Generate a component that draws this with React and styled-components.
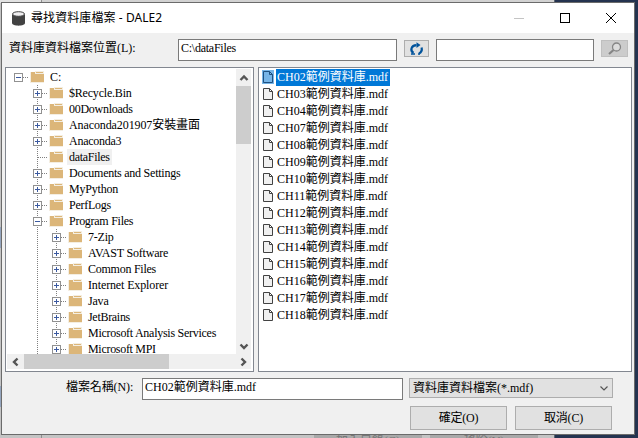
import React from 'react';
import styled, { createGlobalStyle } from 'styled-components';

const Global = createGlobalStyle`
  * { box-sizing: border-box; }
  body { margin: 0; overflow: hidden; }
  svg { flex-shrink: 0; display: block; }
`;

const Desktop = styled.div`
  width: 638px;
  height: 438px;
  overflow: hidden;
  padding: 2px 3px 0 1px;
  background:
    linear-gradient(#8f8f8f, #8f8f8f) 41px 0 / 1px 438px no-repeat,
    linear-gradient(#94a5be, #94a5be) 0 227px / 1px 21px no-repeat,
    linear-gradient(#94a5be, #94a5be) 0 386px / 1px 21px no-repeat,
    linear-gradient(#5c6470, #5c6470) 554px 0 / 1px 438px no-repeat,
    linear-gradient(#24334f, #24334f) 555px 0 / 83px 438px no-repeat,
    linear-gradient(#e2e2e2, #e2e2e2) 0 0 / 41px 3px no-repeat,
    linear-gradient(#d2d2d2, #d2d2d2) 0 0 / 554px 3px no-repeat,
    #c4c4c4;
  font: 12px/16px "Liberation Serif", "Noto Sans CJK TC", serif;
  color: #000;
`;

const Dialog = styled.div`
  width: 634px;
  height: 433px;
  border: 1px solid #6b6b6b;
  background: #f0f0f0;
  display: flex;
  flex-direction: column;
`;

const TitleBar = styled.div`
  height: 30px;
  background: #fff;
  display: flex;
  align-items: center;
  font: 12px/16px "Noto Sans", "Noto Sans CJK TC", sans-serif;
  padding-left: 10px;
`;
const Title = styled.span`
  margin-left: 6px;
  flex: 1;
  white-space: nowrap;
  letter-spacing: 0.08px;
`;
const WindowButtons = styled.div`
  display: flex;
  width: 138px;
`;
const WindowButton = styled.div`
  width: 46px;
  display: flex;
  justify-content: center;
`;

const PathRow = styled.div`
  height: 34px;
  display: flex;
  align-items: flex-start;
  padding: 6px 0 0 7px;
`;
const Label = styled.label`
  width: ${(p) => p.$w}px;
  flex-shrink: 0;
  line-height: 18px;
  letter-spacing: ${(p) => p.$ls || 0}px;
  white-space: nowrap;
`;
const Field = styled.div`
  width: ${(p) => p.$w}px;
  flex-shrink: 0;
  height: 22px;
  border: 1px solid #7a7a7a;
  background: #fff;
  padding: 0 0 0 2px;
  line-height: 17px;
  letter-spacing: ${(p) => p.$ls || 0}px;
  white-space: nowrap;
`;
const ToolButton = styled.div`
  width: ${(p) => p.$w}px;
  flex-shrink: 0;
  height: 17px;
  margin: 1px 7px 0;
  border: 1px solid ${(p) => (p.$off ? '#bfbfbf' : '#adadad')};
  background: ${(p) => (p.$off ? '#ccc' : '#e1e1e1')};
  display: flex;
  align-items: center;
  justify-content: center;
`;

const Panes = styled.div`
  display: flex;
  gap: 4px;
  height: 305px;
  padding-left: 3px;
`;
const Pane = styled.div`
  width: ${(p) => p.$w}px;
  flex-shrink: 0;
  border: 1px solid #828790;
  background: #fff;
  overflow: hidden;
`;
const TreeFrame = styled.div`
  display: grid;
  grid-template: 285px 15px / 229px 15px;
  padding: 1px;
`;
const Tree = styled.div`
  overflow: hidden;
  padding: 0 0 0 2px;
`;
const TreeRow = styled.div`
  display: flex;
  height: 16px;
`;
const NodeLabel = styled.span`
  height: 16px;
  line-height: 16px;
  padding: 0 2px;
  margin-left: 3px;
  letter-spacing: ${(p) => p.$ls}px;
  background: ${(p) => (p.$current ? '#f0f0f0' : 'transparent')};
  white-space: nowrap;
`;
const VScroll = styled.div`
  background: #f0f0f0;
  display: flex;
  flex-direction: column;
`;
const HScroll = styled.div`
  background: #f0f0f0;
  display: flex;
  grid-column: 1 / 3;
`;
const Arrow = styled.div`
  width: ${(p) => (p.$vertical ? 15 : 17)}px;
  height: ${(p) => (p.$vertical ? 17 : 15)}px;
  display: flex;
  align-items: center;
  justify-content: center;
`;
const Thumb = styled.div`
  background: #cdcdcd;
  width: ${(p) => p.$w}px;
  height: ${(p) => p.$h}px;
`;
const Spacer = styled.div`
  flex: 1;
`;

const FileList = styled.div`
  padding: 1px 0 0 3px;
`;
const FileRow = styled.div`
  display: flex;
  height: 17px;
  align-items: flex-start;
`;
const FileName = styled.span`
  margin-left: 2px;
  width: 114px;
  height: 17px;
  line-height: 16px;
  padding-left: 1px;
  white-space: nowrap;
  background: ${(p) => (p.$selected ? '#0078d7' : 'transparent')};
  color: ${(p) => (p.$selected ? '#fff' : '#000')};
`;
const FileIconSvg = styled.svg`
  margin-top: 1px;
`;

const NameRow = styled.div`
  display: flex;
  padding: 6px 0 0 64px;
  height: 34px;
`;
const Select = styled.div`
  width: 204px;
  height: 20px;
  margin-left: 6px;
  border: 1px solid #adadad;
  background: #e1e1e1;
  padding: 0 3px;
  display: flex;
  align-items: center;
  justify-content: space-between;
  line-height: 18px;
`;
const Actions = styled.div`
  display: flex;
  gap: 8px;
  padding-left: 408px;
`;
const Button = styled.div`
  width: 97px;
  height: 24px;
  border: 1px solid #adadad;
  background: #e1e1e1;
  text-align: center;
  line-height: 22px;
  letter-spacing: -0.2px;
`;
const Behind = styled.div`
  display: flex;
  gap: 8px;
  height: 3px;
  overflow: hidden;
  padding-left: 313px;
`;
const BehindButton = styled.div`
  width: 108px;
  height: 24px;
  line-height: 12px;
  text-align: center;
  color: #777;
  background: #a9a9a9;
`;

const chevrons = {
  up: 'M1.5 7 L5 3.5 L8.5 7',
  down: 'M1.5 3.5 L5 7 L8.5 3.5',
  left: 'M6.5 1.5 L3 5 L6.5 8.5',
  right: 'M3.5 1.5 L7 5 L3.5 8.5',
};
const Chevron = ({ dir, w = 2.4, c = '#555' }) => (
  <svg width="10" height="10"><path d={chevrons[dir]} fill="none" stroke={c} strokeWidth={w} /></svg>
);

const Branch = ({ depth, sign, root }) => {
  const x = 9 + depth * 19;
  return (
    <svg width={x + 27} height="16" shapeRendering="crispEdges">
      <g stroke="#808080" strokeDasharray="1 1" fill="none">
        {depth === 2 && <path d="M28.5 0V16" />}
        {!root && <path d={`M${x + 0.5} 0V16`} />}
        <path d={`M${x + 1} 8.5H${x + 11}`} />
      </g>
      {sign && (
        <g>
          <rect x={x - 3.5} y="4.5" width="8" height="8" fill="#fff" stroke="#919191" />
          <path d={`M${x - 2} 8.5H${x + 3}` + (sign === '+' ? `M${x + 0.5} 6V11` : '')} stroke="#3c5aa0" />
        </g>
      )}
      <path d={`M${x + 12} 3H${x + 17}V2H${x + 26}V14H${x + 12}Z`} fill="#f4eee2" />
      <path d={`M${x + 13} 3H${x + 17}V5H${x + 26}V13H${x + 13}Z`} fill="#dcb679" />
      <path d={`M${x + 18} 3.5H${x + 25}`} stroke="#dcb679" />
    </svg>
  );
};

const nodes = [
  ['C:', 0, '-', 0], ['$Recycle.Bin', 1, '+', -0.2], ['00Downloads', 1, '+', -0.27],
  ['Anaconda201907安裝畫面', 1, '+', -0.1], ['Anaconda3', 1, '+', -0.27], ['dataFiles', 1, null, -0.3],
  ['Documents and Settings', 1, '+', -0.24], ['MyPython', 1, '+', -0.2], ['PerfLogs', 1, '+', -0.25],
  ['Program Files', 1, '-', -0.27], ['7-Zip', 2, '+', -0.2], ['AVAST Software', 2, '+', -0.2],
  ['Common Files', 2, '+', -0.25], ['Internet Explorer', 2, '+', -0.13], ['Java', 2, '+', -0.2],
  ['JetBrains', 2, '+', -0.3], ['Microsoft Analysis Services', 2, '+', -0.27], ['Microsoft MPI', 2, '+', -0.3],
];
const files = ['02', '03', '04', '07', '08', '09', '10', '11', '12', '13', '14', '15', '16', '17', '18'];

const FileIcon = ({ selected }) => (
  <FileIconSvg width="12" height="14">
    <rect width="12" height="14" fill={selected ? '#76b5e8' : '#fff'} />
    <path d="M1.5 1.5H7.5L10.5 4.5V12.5H1.5Z M7.5 1.5V4.5H10.5" fill={selected ? '#76b5e8' : '#f0f0f0'} stroke={selected ? '#1f5080' : '#424242'} />
  </FileIconSvg>
);

export default function App() {
  return (
    <Desktop>
      <Global />
      <Dialog>
        <TitleBar>
          <svg width="13" height="15">
            <path d="M0 3.500V12C0 15.500 13 15.500 13 12V3.500Z" fill="#424242" />
            <ellipse cx="6.5" cy="3" rx="6" ry="2.3" fill="#f0eff1" stroke="#424242" />
          </svg>
          <Title>尋找資料庫檔案 - DALE2</Title>
          <WindowButtons>
            <WindowButton><svg width="10" height="10"><path d="M0 5.5H10" stroke="#c4c4c4" /></svg></WindowButton>
            <WindowButton><svg width="10" height="10"><rect x=".5" y=".5" width="9" height="9" fill="none" stroke="#000" /></svg></WindowButton>
            <WindowButton><svg width="10" height="10"><path d="M0 0L10 10M10 0L0 10" stroke="#000" /></svg></WindowButton>
          </WindowButtons>
        </TitleBar>
        <PathRow>
          <Label $w={169}>資料庫資料檔案位置(L):</Label>
          <Field $w={219} $ls={-0.25}>C:\dataFiles</Field>
          <ToolButton $w={25}>
            <svg width="15" height="13" fill="none" stroke="#00539c" strokeWidth="2.2">
              <path d="M4.5 11C0.800 8.500 2 3.500 7.500 3.200" />
              <path d="M2 12H6M9 12H11" strokeWidth="1.300" />
              <path d="M12.600 5.500C13.200 8 12.300 10.300 10 11.500" />
              <path d="M7.500 0.200L11.500 3L7.500 6Z" fill="#00539c" stroke="none" />
            </svg>
          </ToolButton>
          <Field $w={158} />
          <ToolButton $w={27} $off>
            <svg width="15" height="13" fill="none" stroke="#858585">
              <circle cx="9.5" cy="5" r="4" fill="#dcdcdc" strokeWidth="1.300" />
              <path d="M6.500 8L2 12" strokeWidth="2.200" />
            </svg>
          </ToolButton>
        </PathRow>
        <Panes>
          <Pane $w={249}>
            <TreeFrame>
              <Tree>
                {nodes.map(([text, depth, sign, ls]) => (
                  <TreeRow key={text}>
                    <Branch depth={depth} sign={sign} root={depth === 0} />
                    <NodeLabel $ls={ls} $current={text === 'dataFiles'}>{text}</NodeLabel>
                  </TreeRow>
                ))}
              </Tree>
              <VScroll>
                <Arrow $vertical><Chevron dir="up" /></Arrow>
                <Thumb $w={15} $h={58} />
                <Spacer />
                <Arrow $vertical><Chevron dir="down" /></Arrow>
              </VScroll>
              <HScroll>
                <Arrow><Chevron dir="left" /></Arrow>
                <Thumb $w={145} $h={15} />
                <Spacer />
                <Arrow><Chevron dir="right" /></Arrow>
              </HScroll>
            </TreeFrame>
          </Pane>
          <Pane $w={374}>
            <FileList>
              {files.map((n, i) => (
                <FileRow key={n}>
                  <FileIcon selected={i === 0} />
                  <FileName $selected={i === 0}>CH{n}範例資料庫.mdf</FileName>
                </FileRow>
              ))}
            </FileList>
          </Pane>
        </Panes>
        <NameRow>
          <Label $w={76} $ls={-0.1}>檔案名稱(N):</Label>
          <Field $w={261}>CH02範例資料庫.mdf</Field>
          <Select>資料庫資料檔案(*.mdf)<Chevron dir="down" w={1.2} /></Select>
        </NameRow>
        <Actions>
          <Button>確定(O)</Button>
          <Button>取消(C)</Button>
        </Actions>
      </Dialog>
      <Behind>
        <BehindButton>加入目錄(C)</BehindButton>
        <BehindButton>移除(V)</BehindButton>
      </Behind>
    </Desktop>
  );
}
